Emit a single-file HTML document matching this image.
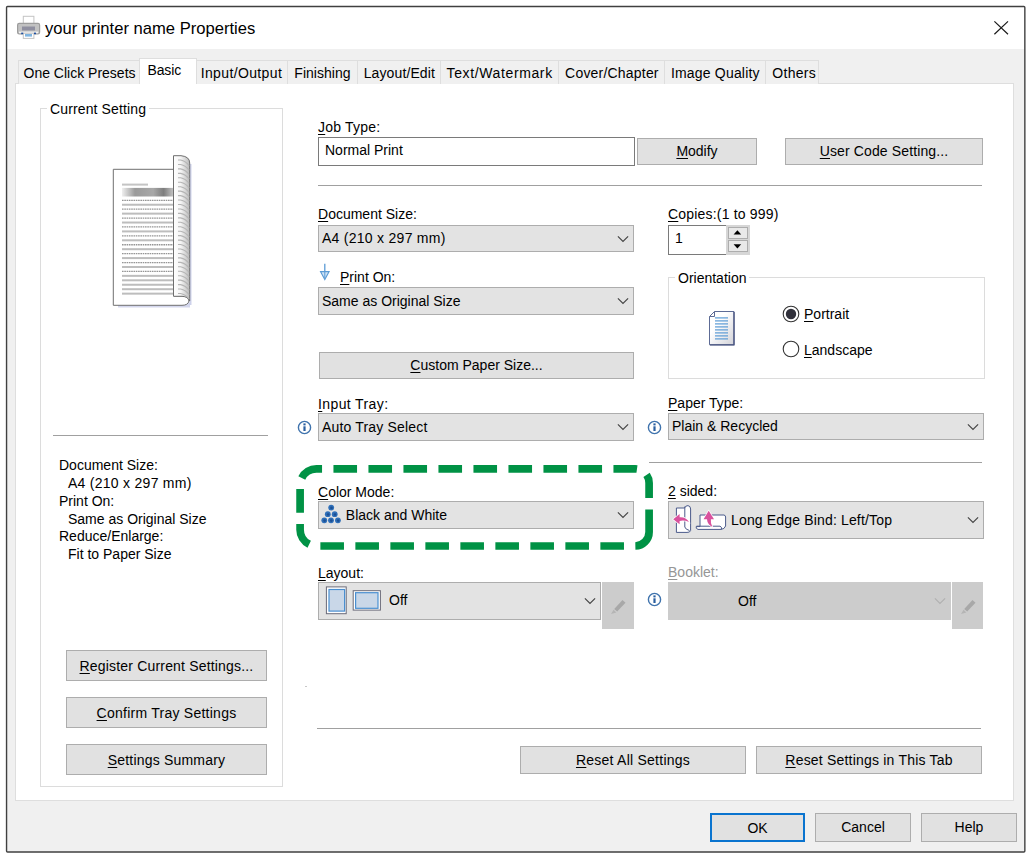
<!DOCTYPE html>
<html><head><meta charset="utf-8"><title>your printer name Properties</title>
<style>
html,body{margin:0;padding:0;background:#fff;}
body{width:1029px;height:854px;position:relative;overflow:hidden;font-family:"Liberation Sans",sans-serif;font-size:14px;color:#000;}
.a{position:absolute;box-sizing:border-box;white-space:nowrap;}
.win{left:7px;top:7px;width:1017px;height:845px;background:#f0f0f0;}
.title{left:7px;top:7px;width:1017px;height:42px;background:#fff;}
.ttext{left:45px;top:16.4px;font-size:16.6px;line-height:24px;color:#000;}
.pane{left:15px;top:83px;width:999px;height:718px;background:#fff;border:1px solid #dedede;}
.tab{top:60px;height:24px;border:1px solid #dedede;border-bottom:none;background:#f0f0f0;line-height:24.4px;text-align:center;}
.tab.on{top:58px;height:26px;background:#fff;line-height:23px;}
.btn{background:#e1e1e1;border:1px solid #adadad;text-align:center;}
.cmb{background:#e3e3e3;border:1px solid #adadad;padding-left:3px;}
.lbl{line-height:16px;height:16px;}
u{text-decoration:underline;text-underline-offset:1.5px;text-decoration-thickness:1px;}
.hr{height:1px;background:#a0a0a0;}
.grp{border:1px solid #dcdcdc;}
.gl{background:#fff;padding:0 3px;line-height:16px;height:16px;}
.dis{color:#969696;}
svg{position:absolute;overflow:visible;}
</style></head><body>
<div class="a win" style="left:7px;top:7px;"></div>
<div class="a title" style="left:7px;top:7px;"></div>
<svg class="a" style="left:0px;top:0px" width="1029" height="854" viewBox="0 0 1029 854"><rect x="6.55" y="6.45" width="1018.3" height="845.6" rx="1" fill="none" stroke="#404040" stroke-width="1.4"/></svg>
<div class="a ttext" style="left:45px;top:17px;">your printer name Properties</div>
<svg class="a" style="left:16px;top:15px" width="26" height="25" viewBox="0 0 26 25"><rect x="7.3" y="1.3" width="10.6" height="8" fill="#fff" stroke="#c4c4c4" stroke-width="1"/><rect x="1.6" y="8.4" width="22" height="10.4" rx="1.6" fill="#c2c2c2" stroke="#9c9c9c" stroke-width="1.2"/><rect x="6" y="11.5" width="13" height="4" fill="#8f8fa0"/><rect x="3" y="16.6" width="19.2" height="1.6" fill="#f4f4f4"/><rect x="7.3" y="18.2" width="10.6" height="5.2" fill="#fff" stroke="#c4c4c4" stroke-width="1"/><rect x="9" y="19" width="7" height="2.6" fill="#7fb4e0"/><rect x="5.2" y="17.6" width="2" height="1.6" fill="#1f4f9f"/><rect x="18" y="17.6" width="2" height="1.6" fill="#1f4f9f"/></svg>
<svg class="a" style="left:994px;top:20.5px" width="15" height="14" viewBox="0 0 15 14"><path d="M0.4 0.4 L14 13.2 M14 0.4 L0.4 13.2" stroke="#1a1a1a" stroke-width="1.2" fill="none"/></svg>
<div class="a pane" style="left:15px;top:83px;"></div>
<div class="a tab " style="left:18px;top:60px;width:123px;text-align:left;text-indent:0;padding-left:4.5px;letter-spacing:0px;">One Click Presets</div>
<div class="a tab on" style="left:139px;top:58px;width:58px;text-align:left;text-indent:0;padding-left:7.5px;letter-spacing:-0.15px;">Basic</div>
<div class="a tab " style="left:196px;top:60px;width:92px;text-align:left;text-indent:0;padding-left:3.7px;letter-spacing:0.37px;">Input/Output</div>
<div class="a tab " style="left:287px;top:60px;width:71px;text-align:left;text-indent:0;padding-left:6.3px;letter-spacing:0.03px;">Finishing</div>
<div class="a tab " style="left:357px;top:60px;width:84px;text-align:left;text-indent:0;padding-left:5.7px;letter-spacing:0.11px;">Layout/Edit</div>
<div class="a tab " style="left:440px;top:60px;width:119px;text-align:left;text-indent:0;padding-left:5.6px;letter-spacing:0.62px;">Text/Watermark</div>
<div class="a tab " style="left:558px;top:60px;width:107px;text-align:left;text-indent:0;padding-left:6.1px;letter-spacing:0.2px;">Cover/Chapter</div>
<div class="a tab " style="left:664px;top:60px;width:102px;text-align:left;text-indent:0;padding-left:5.9px;letter-spacing:0.19px;">Image Quality</div>
<div class="a tab " style="left:765px;top:60px;width:54px;text-align:left;text-indent:0;padding-left:6.3px;letter-spacing:0.3px;">Others</div>
<div class="a grp" style="left:40px;top:108px;width:243px;height:679px;"></div>
<div class="a gl" style="left:47px;top:101px;letter-spacing:0.13px;">Current Setting</div>
<svg class="a" style="left:100px;top:150px" width="95" height="160" viewBox="0 0 95 160"><rect x="18" y="153" width="72" height="4.5" fill="#c9cde9" opacity="0.8"/><rect x="89.3" y="14" width="2.2" height="141" fill="#c9cde9" opacity="0.9"/><path d="M13.3 19.3 H74 V146 H85 Q89 148 89 151 Q88 155.3 82 155.3 H13.3 Z" fill="#fff" stroke="#707070" stroke-width="1"/><rect x="22" y="33.6" width="26" height="2" fill="#c4c4c4"/><defs><linearGradient id="gb" x1="0" x2="1" y1="0" y2="0"><stop offset="0" stop-color="#efefef"/><stop offset="0.25" stop-color="#9a9a9a"/><stop offset="0.6" stop-color="#a8a8a8"/><stop offset="0.8" stop-color="#7e7e7e"/><stop offset="1" stop-color="#c8c8c8"/></linearGradient><linearGradient id="gc" x1="0" x2="1" y1="0" y2="0"><stop offset="0" stop-color="#fff"/><stop offset="0.45" stop-color="#f4f4f4"/><stop offset="1" stop-color="#b9b9b9"/></linearGradient></defs><rect x="22" y="37.9" width="52" height="8.6" fill="url(#gb)"/><line x1="22" x2="74" y1="50.30" y2="50.30" stroke="#959595" stroke-width="1.3" stroke-dasharray="1.6 0.7"/><rect x="22" y="53.74" width="52" height="2" fill="#bdbdbd"/><line x1="22" x2="74" y1="59.19" y2="59.19" stroke="#959595" stroke-width="1.3" stroke-dasharray="1.6 0.7"/><rect x="22" y="62.63" width="52" height="2" fill="#bdbdbd"/><line x1="22" x2="74" y1="68.08" y2="68.08" stroke="#959595" stroke-width="1.3" stroke-dasharray="1.6 0.7"/><rect x="22" y="71.53" width="52" height="2" fill="#bdbdbd"/><line x1="22" x2="74" y1="76.97" y2="76.97" stroke="#959595" stroke-width="1.3" stroke-dasharray="1.6 0.7"/><rect x="22" y="80.41" width="52" height="2" fill="#bdbdbd"/><line x1="22" x2="74" y1="85.86" y2="85.86" stroke="#959595" stroke-width="1.3" stroke-dasharray="1.6 0.7"/><rect x="22" y="89.31" width="52" height="2" fill="#bdbdbd"/><line x1="22" x2="74" y1="94.75" y2="94.75" stroke="#959595" stroke-width="1.3" stroke-dasharray="1.6 0.7"/><rect x="22" y="98.19" width="52" height="2" fill="#bdbdbd"/><line x1="22" x2="74" y1="103.64" y2="103.64" stroke="#959595" stroke-width="1.3" stroke-dasharray="1.6 0.7"/><rect x="22" y="107.09" width="52" height="2" fill="#bdbdbd"/><line x1="22" x2="74" y1="112.53" y2="112.53" stroke="#959595" stroke-width="1.3" stroke-dasharray="1.6 0.7"/><rect x="22" y="115.98" width="52" height="2" fill="#bdbdbd"/><line x1="22" x2="74" y1="121.42" y2="121.42" stroke="#959595" stroke-width="1.3" stroke-dasharray="1.6 0.7"/><rect x="22" y="124.86" width="52" height="2" fill="#bdbdbd"/><rect x="22" y="129.31" width="52" height="2" fill="#bdbdbd"/><rect x="22" y="133.75" width="52" height="2" fill="#bdbdbd"/><rect x="22" y="138.20" width="52" height="2" fill="#bdbdbd"/><rect x="22" y="142.64" width="52" height="2" fill="#bdbdbd"/><path d="M73.5 5.7 H81 Q89.7 6.5 89.7 13 V151 Q88 146.6 82 146.3 H73.5 Z" fill="url(#gc)" stroke="#6e6e6e" stroke-width="1"/><path d="M78 10.00 h2.6 q5 1 8.6 5.6" fill="none" stroke="#b4b4b4" stroke-width="1.1"/><path d="M78 14.45 h2.6 q5 1 8.6 5.6" fill="none" stroke="#b4b4b4" stroke-width="1.1"/><path d="M78 18.90 h2.6 q5 1 8.6 5.6" fill="none" stroke="#b4b4b4" stroke-width="1.1"/><path d="M78 23.35 h2.6 q5 1 8.6 5.6" fill="none" stroke="#b4b4b4" stroke-width="1.1"/><path d="M78 27.80 h2.6 q5 1 8.6 5.6" fill="none" stroke="#b4b4b4" stroke-width="1.1"/><path d="M78 32.25 h2.6 q5 1 8.6 5.6" fill="none" stroke="#b4b4b4" stroke-width="1.1"/><path d="M78 36.70 h2.6 q5 1 8.6 5.6" fill="none" stroke="#b4b4b4" stroke-width="1.1"/><path d="M78 41.15 h2.6 q5 1 8.6 5.6" fill="none" stroke="#b4b4b4" stroke-width="1.1"/><path d="M78 45.60 h2.6 q5 1 8.6 5.6" fill="none" stroke="#b4b4b4" stroke-width="1.1"/><path d="M78 50.05 h2.6 q5 1 8.6 5.6" fill="none" stroke="#b4b4b4" stroke-width="1.1"/><path d="M78 54.50 h2.6 q5 1 8.6 5.6" fill="none" stroke="#b4b4b4" stroke-width="1.1"/><path d="M78 58.95 h2.6 q5 1 8.6 5.6" fill="none" stroke="#b4b4b4" stroke-width="1.1"/><path d="M78 63.40 h2.6 q5 1 8.6 5.6" fill="none" stroke="#b4b4b4" stroke-width="1.1"/><path d="M78 67.85 h2.6 q5 1 8.6 5.6" fill="none" stroke="#b4b4b4" stroke-width="1.1"/><path d="M78 72.30 h2.6 q5 1 8.6 5.6" fill="none" stroke="#b4b4b4" stroke-width="1.1"/><path d="M78 76.75 h2.6 q5 1 8.6 5.6" fill="none" stroke="#b4b4b4" stroke-width="1.1"/><path d="M78 81.20 h2.6 q5 1 8.6 5.6" fill="none" stroke="#b4b4b4" stroke-width="1.1"/><path d="M78 85.65 h2.6 q5 1 8.6 5.6" fill="none" stroke="#b4b4b4" stroke-width="1.1"/><path d="M78 90.10 h2.6 q5 1 8.6 5.6" fill="none" stroke="#b4b4b4" stroke-width="1.1"/><path d="M78 94.55 h2.6 q5 1 8.6 5.6" fill="none" stroke="#b4b4b4" stroke-width="1.1"/><path d="M78 99.00 h2.6 q5 1 8.6 5.6" fill="none" stroke="#b4b4b4" stroke-width="1.1"/><path d="M78 103.45 h2.6 q5 1 8.6 5.6" fill="none" stroke="#b4b4b4" stroke-width="1.1"/><path d="M78 107.90 h2.6 q5 1 8.6 5.6" fill="none" stroke="#b4b4b4" stroke-width="1.1"/><path d="M78 112.35 h2.6 q5 1 8.6 5.6" fill="none" stroke="#b4b4b4" stroke-width="1.1"/><path d="M78 116.80 h2.6 q5 1 8.6 5.6" fill="none" stroke="#b4b4b4" stroke-width="1.1"/><path d="M78 121.25 h2.6 q5 1 8.6 5.6" fill="none" stroke="#b4b4b4" stroke-width="1.1"/><path d="M78 125.70 h2.6 q5 1 8.6 5.6" fill="none" stroke="#b4b4b4" stroke-width="1.1"/><path d="M78 130.15 h2.6 q5 1 8.6 5.6" fill="none" stroke="#b4b4b4" stroke-width="1.1"/><path d="M78 134.60 h2.6 q5 1 8.6 5.6" fill="none" stroke="#b4b4b4" stroke-width="1.1"/><path d="M78 139.05 h2.6 q5 1 8.6 5.6" fill="none" stroke="#b4b4b4" stroke-width="1.1"/><path d="M78 143.50 h2.6 q5 1 8.6 5.6" fill="none" stroke="#b4b4b4" stroke-width="1.1"/></svg>
<div class="a hr" style="left:53px;top:435px;width:215px;"></div>
<div class="a lbl " style="left:59px;top:457.1px;">Document Size:</div>
<div class="a lbl " style="left:68px;top:474.9px;"><span style="letter-spacing:0.27px">A4 (210 x 297 mm)</span></div>
<div class="a lbl " style="left:59px;top:492.7px;">Print On:</div>
<div class="a lbl " style="left:68px;top:510.5px;">Same as Original Size</div>
<div class="a lbl " style="left:59px;top:528.3px;">Reduce/Enlarge:</div>
<div class="a lbl " style="left:68px;top:546.1px;">Fit to Paper Size</div>
<div class="a btn" style="left:66px;top:650px;width:201px;height:31px;line-height:29px;line-height:31.5px;letter-spacing:0.18px;"><u>R</u>egister Current Settings...</div>
<div class="a btn" style="left:66px;top:697px;width:201px;height:31px;line-height:29px;line-height:31.5px;letter-spacing:0.25px;"><u>C</u>onfirm Tray Settings</div>
<div class="a btn" style="left:66px;top:744px;width:201px;height:31px;line-height:29px;line-height:31.5px;letter-spacing:0.2px;"><u>S</u>ettings Summary</div>
<div class="a lbl " style="left:318px;top:119.0px;letter-spacing:0.2px;"><u>J</u>ob Type:</div>
<div class="a " style="left:318px;top:137px;width:317px;height:29px;background:#fff;border:1px solid #7a7a7a;line-height:24px;padding-left:6px;">Normal Print</div>
<div class="a btn" style="left:637px;top:138px;width:120px;height:27px;line-height:25px;"><u>M</u>odify</div>
<div class="a btn" style="left:785px;top:138px;width:198px;height:27px;line-height:25px;letter-spacing:0.12px;"><u>U</u>ser Code Setting...</div>
<div class="a hr" style="left:318px;top:185px;width:664px;"></div>
<div class="a lbl " style="left:318px;top:205.7px;"><u>D</u>ocument Size:</div>
<div class="a cmb" style="left:318px;top:225px;width:316.3px;height:27px;line-height:25px;letter-spacing:0.27px;">A4 (210 x 297 mm)</div>
<svg class="a" style="left:617.0999999999999px;top:234.7px" width="12" height="8" viewBox="0 0 12 8"><path d="M0.9 1.4 L6 6.5 L11.1 1.4" fill="none" stroke="#444" stroke-width="1.15"/></svg>
<svg class="a" style="left:319px;top:263px" width="12" height="18" viewBox="0 0 12 18"><path d="M5.8 0.7 V9" stroke="#5b9bd5" stroke-width="1.3" fill="none"/><path d="M1.5 8.6 H10.1 L5.8 16.6 Z" fill="#cfe3f5" stroke="#5b9bd5" stroke-width="1.1"/><path d="M5.8 8.6 V15" stroke="#5b9bd5" stroke-width="1"/></svg>
<div class="a lbl " style="left:340px;top:269.3px;"><u>P</u>rint On:</div>
<div class="a cmb" style="left:318px;top:287px;width:316.3px;height:28px;line-height:26px;">Same as Original Size</div>
<svg class="a" style="left:617.0999999999999px;top:297.2px" width="12" height="8" viewBox="0 0 12 8"><path d="M0.9 1.4 L6 6.5 L11.1 1.4" fill="none" stroke="#444" stroke-width="1.15"/></svg>
<div class="a btn" style="left:319px;top:352px;width:315px;height:27px;line-height:25px;"><u>C</u>ustom Paper Size...</div>
<div class="a lbl " style="left:318px;top:395.5px;letter-spacing:0.39px;"><u>I</u>nput Tray:</div>
<div class="a cmb" style="left:318px;top:413px;width:316.3px;height:28px;line-height:26px;letter-spacing:0.17px;">Auto Tray Select</div>
<svg class="a" style="left:617.0999999999999px;top:423.2px" width="12" height="8" viewBox="0 0 12 8"><path d="M0.9 1.4 L6 6.5 L11.1 1.4" fill="none" stroke="#444" stroke-width="1.15"/></svg>
<svg class="a" style="left:297.0px;top:419.5px" width="15" height="15" viewBox="0 0 15 15"><circle cx="7.5" cy="7.5" r="6.1" fill="#fff" stroke="#3f73ad" stroke-width="1.4"/><rect x="6.4" y="6.3" width="2.2" height="4.7" fill="#2a5fa0"/><rect x="6.4" y="3.4" width="2.2" height="2" fill="#2a5fa0"/></svg>
<div class="a lbl " style="left:318px;top:483.8px;"><u>C</u>olor Mode:</div>
<div class="a cmb" style="left:318px;top:501px;width:316.3px;height:28px;line-height:26px;padding-left:26.8px;">Black and White</div>
<svg class="a" style="left:617.0999999999999px;top:511.20000000000005px" width="12" height="8" viewBox="0 0 12 8"><path d="M0.9 1.4 L6 6.5 L11.1 1.4" fill="none" stroke="#444" stroke-width="1.15"/></svg>
<svg class="a" style="left:318px;top:501px" width="30" height="28" viewBox="0 0 30 28"><circle cx="13.2" cy="6.6" r="2.9" fill="#2f6fb8"/><circle cx="13.5" cy="6.9" r="1.3" fill="#1b4f94"/><circle cx="9.8" cy="13.2" r="2.9" fill="#2f6fb8"/><circle cx="10.1" cy="13.5" r="1.3" fill="#1b4f94"/><circle cx="16.7" cy="13.2" r="2.9" fill="#2f6fb8"/><circle cx="17.0" cy="13.5" r="1.3" fill="#1b4f94"/><circle cx="6.3" cy="19.3" r="2.9" fill="#2f6fb8"/><circle cx="6.6" cy="19.6" r="1.3" fill="#1b4f94"/><circle cx="13.0" cy="19.3" r="2.9" fill="#2f6fb8"/><circle cx="13.3" cy="19.6" r="1.3" fill="#1b4f94"/><circle cx="19.9" cy="19.3" r="2.9" fill="#2f6fb8"/><circle cx="20.2" cy="19.6" r="1.3" fill="#1b4f94"/></svg>
<div class="a lbl " style="left:318px;top:565.0px;"><u>L</u>ayout:</div>
<div class="a cmb" style="left:318px;top:582px;width:283px;height:37.5px;line-height:35.5px;padding-left:70px;">Off</div>
<svg class="a" style="left:583.8px;top:596.95px" width="12" height="8" viewBox="0 0 12 8"><path d="M0.9 1.4 L6 6.5 L11.1 1.4" fill="none" stroke="#444" stroke-width="1.15"/></svg>
<svg class="a" style="left:318px;top:582px" width="70" height="38" viewBox="0 0 70 38"><rect x="8.4" y="4.9" width="19.8" height="26.8" fill="#fff" stroke="#6a6a78" stroke-width="1"/><rect x="11" y="7.5" width="15.6" height="21.6" fill="#c9d7e8" stroke="#4a8fd0" stroke-width="1.2"/><rect x="35.2" y="8.7" width="27.2" height="19.4" fill="#fff" stroke="#6a6a78" stroke-width="1"/><rect x="37.6" y="10.7" width="22.4" height="15.6" fill="#c9d7e8" stroke="#4a8fd0" stroke-width="1.2"/></svg>
<div class="a " style="left:602px;top:582px;width:32px;height:47px;background:#cccccc;"></div>
<svg class="a" style="left:602px;top:582px" width="32" height="47" viewBox="0 0 32 47"><path d="M12.2 27 L20.5 18 L23.5 20.8 L15.2 29.6 Z" fill="#a8a8a8"/><path d="M11.6 27.8 L14.4 30.4 L9 32 Z" fill="#b5b5b5"/></svg>
<svg class="a" style="left:0px;top:0px" width="1029" height="854" viewBox="0 0 1029 854"><path d="M649.1 532 V482.9 A14 14 0 0 0 635.1 468.9 H316.4 A16.3 16.3 0 0 0 300.1 485.2 V529.7 A16.3 16.3 0 0 0 316.4 546 H635.1 A14 14 0 0 0 649.1 532 Z" fill="none" stroke="#009245" stroke-width="7.7" stroke-dasharray="23.6 11.4" stroke-dashoffset="1"/></svg>
<div class="a lbl " style="left:668px;top:206.3px;letter-spacing:0.19px;"><u>C</u>opies:(1 to 999)</div>
<div class="a " style="left:668px;top:225px;width:82px;height:30px;background:#d6d6d6;"></div>
<div class="a " style="left:668px;top:225px;width:58px;height:30px;background:#fff;border:1px solid #7a7a7a;border-right:none;line-height:25px;padding-left:6px;">1</div>
<div class="a " style="left:727.5px;top:227px;width:20.3px;height:11.5px;background:#e9e9e9;border:1px solid #adadad;"></div>
<div class="a " style="left:727.5px;top:240px;width:20.3px;height:11.5px;background:#e9e9e9;border:1px solid #adadad;"></div>
<svg class="a" style="left:727px;top:227px" width="21" height="25" viewBox="0 0 21 25"><path d="M6.6 7.6 L10.4 3.2 L14.2 7.6 Z" fill="#000"/><path d="M6.6 17.2 L10.4 21.6 L14.2 17.2 Z" fill="#000"/></svg>
<div class="a grp" style="left:668px;top:277px;width:317px;height:102px;"></div>
<div class="a gl" style="left:675px;top:269.5px;">Orientation</div>
<svg class="a" style="left:709px;top:311.3px" width="26" height="35" viewBox="0 0 26 35"><defs><linearGradient id="pgg" x1="0" y1="0" x2="1" y2="1"><stop offset="0.35" stop-color="#ffffff"/><stop offset="1" stop-color="#d2d2d8"/></linearGradient></defs><path d="M5.5 0.5 H25 V33.8 H0.5 V5.5 Z" fill="url(#pgg)" stroke="#5d6b95" stroke-width="1"/><path d="M0.5 5.5 H5.5 V0.5" fill="none" stroke="#5d6b95" stroke-width="1"/><path d="M25 1 V33.8 H1" fill="none" stroke="#4a5580" stroke-width="1.3"/><rect x="6" y="6.3" width="13" height="1.2" fill="#5b9bd5"/><rect x="6" y="9.3" width="13" height="1.2" fill="#5b9bd5"/><rect x="6" y="12.3" width="13" height="1.2" fill="#5b9bd5"/><rect x="6" y="15.3" width="13" height="1.2" fill="#5b9bd5"/><rect x="6" y="18.3" width="13" height="1.2" fill="#5b9bd5"/><rect x="6" y="21.3" width="13" height="1.2" fill="#5b9bd5"/><rect x="6" y="24.3" width="13" height="1.2" fill="#5b9bd5"/><rect x="6" y="27.3" width="13" height="1.2" fill="#5b9bd5"/></svg>
<svg class="a" style="left:782px;top:304.5px" width="18" height="18" viewBox="0 0 18 18"><circle cx="9" cy="9" r="7.8" fill="#fff" stroke="#333" stroke-width="1.1"/><circle cx="9" cy="9" r="5.2" fill="#30303a"/></svg>
<svg class="a" style="left:782px;top:340px" width="18" height="18" viewBox="0 0 18 18"><circle cx="9" cy="9" r="7.8" fill="#fff" stroke="#333" stroke-width="1.1"/></svg>
<div class="a lbl " style="left:804px;top:306.0px;"><u>P</u>ortrait</div>
<div class="a lbl " style="left:804px;top:341.6px;"><u>L</u>andscape</div>
<div class="a lbl " style="left:668px;top:395.3px;"><u>P</u>aper Type:</div>
<div class="a cmb" style="left:668px;top:413px;width:316.3px;height:27px;line-height:25px;">Plain &amp; Recycled</div>
<svg class="a" style="left:967.0999999999999px;top:422.7px" width="12" height="8" viewBox="0 0 12 8"><path d="M0.9 1.4 L6 6.5 L11.1 1.4" fill="none" stroke="#444" stroke-width="1.15"/></svg>
<svg class="a" style="left:647.0px;top:419.5px" width="15" height="15" viewBox="0 0 15 15"><circle cx="7.5" cy="7.5" r="6.1" fill="#fff" stroke="#3f73ad" stroke-width="1.4"/><rect x="6.4" y="6.3" width="2.2" height="4.7" fill="#2a5fa0"/><rect x="6.4" y="3.4" width="2.2" height="2" fill="#2a5fa0"/></svg>
<div class="a hr" style="left:649px;top:462px;width:333px;"></div>
<div class="a lbl " style="left:668px;top:483.4px;"><u>2</u> sided:</div>
<div class="a cmb" style="left:668px;top:501px;width:316.3px;height:38px;line-height:36px;padding-left:62px;letter-spacing:0.16px;">Long Edge Bind: Left/Top</div>
<svg class="a" style="left:967.0999999999999px;top:516.2px" width="12" height="8" viewBox="0 0 12 8"><path d="M0.9 1.4 L6 6.5 L11.1 1.4" fill="none" stroke="#444" stroke-width="1.15"/></svg>
<svg class="a" style="left:668px;top:501px" width="62" height="38" viewBox="0 0 62 38"><path d="M8.4 7 H16.5 Q17.5 4.6 20 4.6 Q22.6 5 22.6 8 V29.5 Q22 31.6 19 31.4 H8.4 Z" fill="#fff" stroke="#4a5a8a" stroke-width="1"/><path d="M16.8 5.5 V26 Q17.5 28.5 21.5 29.5" fill="none" stroke="#4a5a8a" stroke-width="1"/><path d="M5.2 18.2 L11.6 13 V16.2 Q18 15.8 21 21 Q16 18.9 11.6 20 V23.2 Z" fill="#d9519d" stroke="#fff" stroke-width="1.4" paint-order="stroke"/><path d="M32 14 H56 Q57.6 14.4 57.6 16 V25 Q56.5 28.2 53 28.4 H30 Q27.5 27.5 28.2 25.6 H32 Z" fill="#fff" stroke="#4a5a8a" stroke-width="1"/><path d="M28.5 25.2 H52 Q54.2 26 53.4 28.2" fill="none" stroke="#4a5a8a" stroke-width="1"/><path d="M40.7 9.8 L46 18.2 H42.9 Q42.3 22 44.4 26 Q39.3 23.2 39 18.2 H35.6 Z" fill="#d9519d" stroke="#fff" stroke-width="1.4" paint-order="stroke"/></svg>
<div class="a lbl dis" style="left:668px;top:564.3px;"><u>B</u>ooklet:</div>
<div class="a " style="left:668px;top:582px;width:283px;height:37.5px;background:#cccccc;line-height:38px;padding-left:70px;">Off</div>
<svg class="a" style="left:933.5px;top:596.5px" width="12" height="8" viewBox="0 0 12 8"><path d="M0.9 1.4 L6 6.5 L11.1 1.4" fill="none" stroke="#b0b0b0" stroke-width="1.15"/></svg>
<div class="a " style="left:952px;top:582px;width:31px;height:47px;background:#cccccc;"></div>
<svg class="a" style="left:952px;top:582px" width="32" height="47" viewBox="0 0 32 47"><path d="M12.2 27 L20.5 18 L23.5 20.8 L15.2 29.6 Z" fill="#a8a8a8"/><path d="M11.6 27.8 L14.4 30.4 L9 32 Z" fill="#b5b5b5"/></svg>
<svg class="a" style="left:647.0px;top:591.5px" width="15" height="15" viewBox="0 0 15 15"><circle cx="7.5" cy="7.5" r="6.1" fill="#fff" stroke="#3f73ad" stroke-width="1.4"/><rect x="6.4" y="6.3" width="2.2" height="4.7" fill="#2a5fa0"/><rect x="6.4" y="3.4" width="2.2" height="2" fill="#2a5fa0"/></svg>
<div class="a " style="left:305px;top:686px;width:2px;height:1px;background:#c8c8c8;"></div>
<div class="a hr" style="left:317px;top:728px;width:664px;"></div>
<div class="a btn" style="left:520px;top:746px;width:226px;height:28px;line-height:26px;letter-spacing:0.24px;"><u>R</u>eset All Settings</div>
<div class="a btn" style="left:756px;top:746px;width:226px;height:28px;line-height:26px;letter-spacing:0.2px;"><u>R</u>eset Settings in This Tab</div>
<div class="a btn" style="left:710px;top:813px;width:95px;height:29px;line-height:27px;border:2px solid #0a74cf;line-height:26px;">OK</div>
<div class="a btn" style="left:815px;top:813px;width:96px;height:29px;line-height:27px;">Cancel</div>
<div class="a btn" style="left:921px;top:813px;width:96px;height:29px;line-height:27px;">Help</div>
</body></html>
